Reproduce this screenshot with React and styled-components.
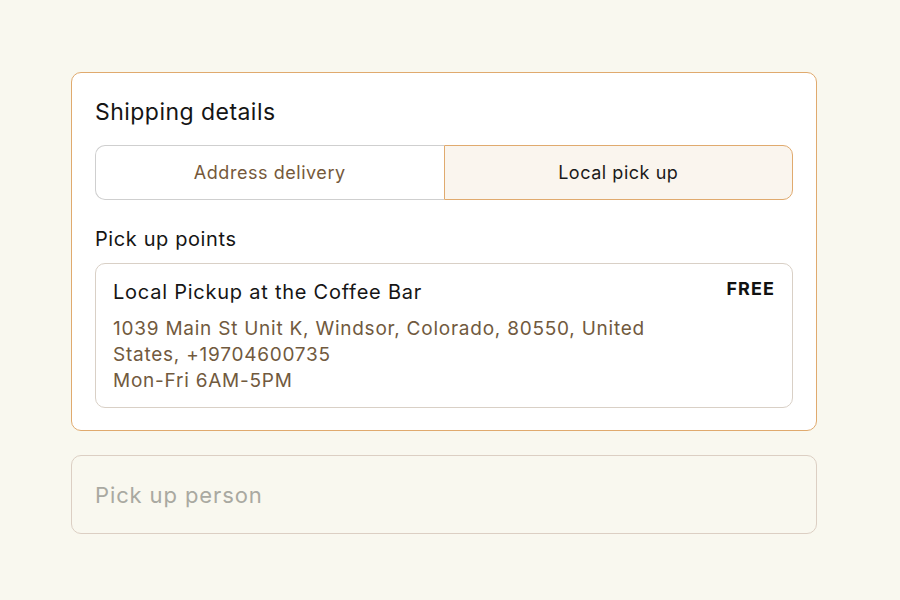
import React from 'react';
import styled, { createGlobalStyle } from 'styled-components';

const GlobalStyle = createGlobalStyle`
  html, body {
    margin: 0;
    padding: 0;
    background: #f9f8ef;
    font-family: Inter, "Noto Sans", sans-serif;
    -webkit-font-smoothing: antialiased;
  }
`;

const Page = styled.div`
  padding: 72px 0 0 71px;
  width: 746px;
  display: flex;
  flex-direction: column;
  gap: 24px;
`;

const Card = styled.section`
  background: #ffffff;
  border: 1px solid #e0aa6e;
  border-radius: 10px;
  padding: 24px 23px 22px 23px;
  display: flex;
  flex-direction: column;
`;

const Title = styled.h2`
  margin: 0;
  font-size: 23px;
  font-weight: 400;
  line-height: 30px;
  letter-spacing: 0.02em;
  color: #151515;
`;

const Toggle = styled.div`
  margin-top: 18px;
  display: flex;
  height: 55px;
`;

const ToggleButton = styled.button`
  flex: 1;
  font-family: inherit;
  font-size: 18px;
  letter-spacing: 0.03em;
  cursor: pointer;
  border: 1px solid ${p => (p.$active ? '#e0aa6e' : '#cfcfcf')};
  background: ${p => (p.$active ? '#faf5ee' : '#ffffff')};
  color: ${p => (p.$active ? '#1a1a1a' : '#76593a')};
  border-radius: ${p => (p.$side === 'left' ? '10px 0 0 10px' : '0 10px 10px 0')};
  ${p => p.$side === 'left' && 'border-right: none;'}
`;

const Label = styled.div`
  margin-top: 26px;
  font-size: 20px;
  line-height: 26px;
  letter-spacing: 0.03em;
  color: #151515;
`;

const PointCard = styled.div`
  margin-top: 11px;
  border: 1px solid #d9d0c6;
  border-radius: 10px;
  padding: 14px 17px 13px 17px;
  display: flex;
  justify-content: space-between;
  align-items: flex-start;
`;

const PointInfo = styled.div`
  display: flex;
  flex-direction: column;
  gap: 10px;
  max-width: 560px;
`;

const PointName = styled.div`
  font-size: 20px;
  line-height: 28px;
  letter-spacing: 0.038em;
  color: #151515;
`;

const Address = styled.div`
  font-size: 19px;
  line-height: 26px;
  letter-spacing: 0.04em;
  color: #715a3e;
`;

const Price = styled.div`
  font-size: 18px;
  font-weight: 700;
  letter-spacing: 0.06em;
  line-height: 22px;
  color: #111;
`;

const Input = styled.input`
  box-sizing: border-box;
  width: 100%;
  height: 79px;
  background: #f9f8ef;
  border: 1px solid #dccfc3;
  border-radius: 10px;
  padding: 0 23px;
  font-family: inherit;
  font-size: 22px;
  letter-spacing: 0.04em;
  color: #222;
  outline: none;
  &::placeholder {
    color: #a9a9a1;
  }
`;

export default function App() {
  return (
    <>
      <GlobalStyle />
      <Page>
        <Card>
          <Title>Shipping details</Title>
          <Toggle>
            <ToggleButton $side="left">Address delivery</ToggleButton>
            <ToggleButton $side="right" $active>Local pick up</ToggleButton>
          </Toggle>
          <Label>Pick up points</Label>
          <PointCard>
            <PointInfo>
              <PointName>Local Pickup at the Coffee Bar</PointName>
              <Address>
                1039 Main St Unit K, Windsor, Colorado, 80550, United States, +19704600735
                <br />
                Mon-Fri 6AM-5PM
              </Address>
            </PointInfo>
            <Price>FREE</Price>
          </PointCard>
        </Card>
        <Input placeholder="Pick up person" />
      </Page>
    </>
  );
}
